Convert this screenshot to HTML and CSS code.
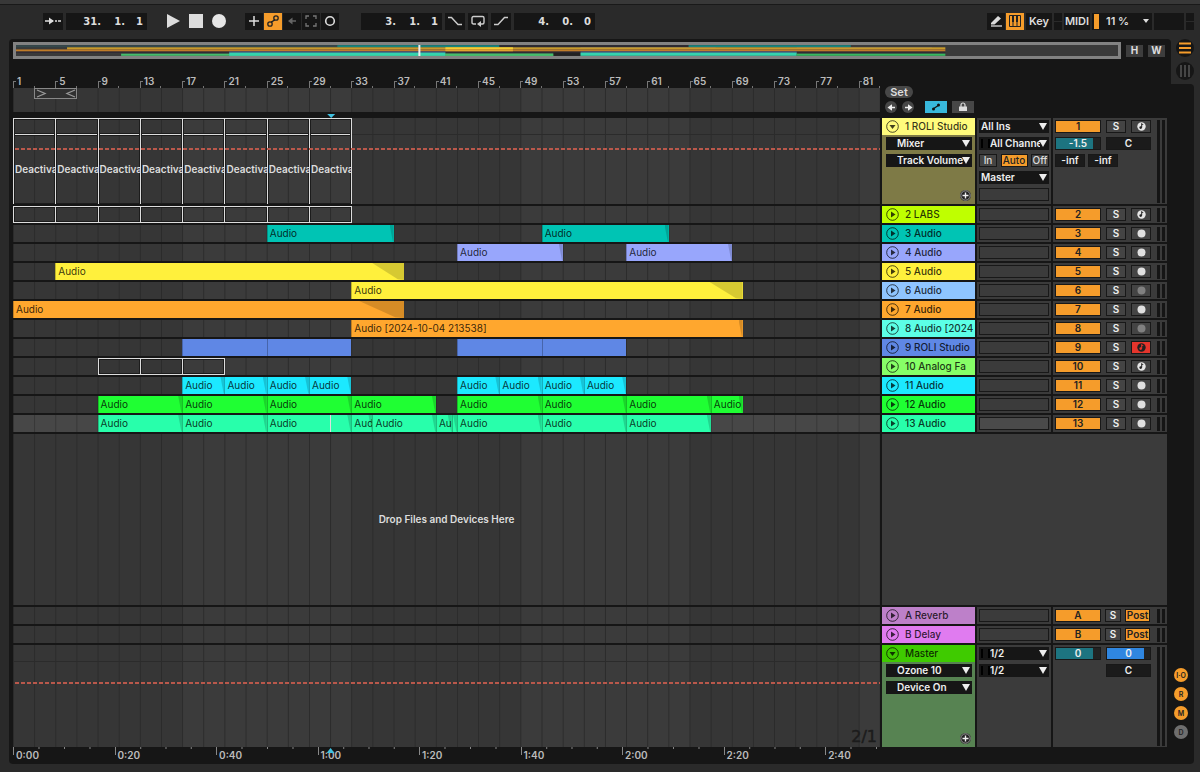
FILE: index.html
```html
<!DOCTYPE html>
<html lang="en">
<head>
    <meta charset="utf-8">
    <title>Arrangement View</title>
    <link rel="stylesheet" href="styles.css">
</head>
<body>

<header class="toolbar">
    <div class="group">
        <button class="tool follow" aria-label="Follow"><svg width="16" height="10" viewBox="0 0 16 10"><path d="M0 5h8M10 5h2M13 5h3" stroke="#ddd" stroke-width="1.5"/><path d="M4 1.5L9 5l-5 3.500z" fill="#ddd"/></svg></button>
        <div class="position">
            <input aria-label="Bar" value="31."><input aria-label="Beat" value="1."><input aria-label="Sixteenth" value="1">
        </div>
    </div>
    <div class="group transport">
        <button aria-label="Play"><svg width="14" height="16" viewBox="0 0 14 16"><path d="M1 1l13 7-13 7z" fill="#ddd"/></svg></button>
        <button aria-label="Stop"><svg width="14" height="16" viewBox="0 0 14 16"><path d="M0 1h14v14H0z" fill="#ddd"/></svg></button>
        <button aria-label="Record"><svg width="14" height="16" viewBox="0 0 14 16"><circle cx="7" cy="8" r="7" fill="#e6e6e6"/></svg></button>
    </div>
    <div class="group tight">
        <button class="tool" aria-label="Overdub"><svg width="12" height="12" viewBox="0 0 12 12"><path d="M6 1v10M1 6h10" stroke="#ddd" stroke-width="1.5"/></svg></button>
        <button class="tool on" aria-label="Automation arm"><svg width="14" height="14" viewBox="0 0 14 14" fill="none" stroke="#222" stroke-width="1.300"><circle cx="4" cy="10" r="2.200"/><circle cx="10" cy="4" r="2.200"/><path d="M5 8c2 0 2-2 4-2"/></svg></button>
        <button class="tool" aria-label="Re-enable automation"><svg width="10" height="10" viewBox="0 0 10 10"><path d="M9 5H3" stroke="#666" stroke-width="1.500"/><path d="M5.500 1.500L1 5l4.500 3.500z" fill="#666"/></svg></button>
        <button class="tool" aria-label="Capture"><svg width="12" height="12" viewBox="0 0 12 12" fill="none" stroke="#777" stroke-width="1.300"><path d="M1 4V1h3M8 1h3v3M11 8v3H8M4 11H1V8"/></svg></button>
        <button class="tool" aria-label="Session record"><svg width="12" height="12" viewBox="0 0 12 12"><circle cx="6" cy="6" r="4.300" fill="none" stroke="#ddd" stroke-width="1.600"/></svg></button>
    </div>
    <div class="group loop">
        <div class="position">
            <input aria-label="Loop bar" value="3."><input aria-label="Loop beat" value="1."><input aria-label="Loop sixteenth" value="1">
        </div>
        <button class="tool wide" aria-label="Punch in"><svg width="14" height="10" viewBox="0 0 14 10"><path d="M0 1.500h3.500L10 8.500h4" fill="none" stroke="#ccc" stroke-width="1.400"/></svg></button>
        <button class="tool wide" aria-label="Loop"><svg width="14" height="12" viewBox="0 0 14 12"><path d="M5 9H2.500Q1 9 1 7.500V3Q1 1.500 2.500 1.500h9Q13 1.500 13 3v4.500Q13 9 11.500 9H9" fill="none" stroke="#ccc" stroke-width="1.400"/><path d="M10 6v6L6 9z" fill="#ccc"/></svg></button>
        <button class="tool wide" aria-label="Punch out"><svg width="14" height="10" viewBox="0 0 14 10"><path d="M0 8.500h4L10.500 1.500H14" fill="none" stroke="#ccc" stroke-width="1.400"/></svg></button>
        <div class="position">
            <input aria-label="Length bars" value="4."><input aria-label="Length beats" value="0."><input aria-label="Length sixteenths" value="0">
        </div>
    </div>
    <div class="group right">
        <div class="group tight">
            <button class="tool" aria-label="Draw mode"><svg width="13" height="12" viewBox="0 0 13 12"><path d="M1 8l7-7 3 2.500L4.500 9.500H1z" fill="#ddd"/><path d="M1 11h11" stroke="#ddd" stroke-width="1.300"/></svg></button>
            <button class="tool on" aria-label="Computer keyboard"><svg width="12" height="12" viewBox="0 0 12 12"><path d="M.500.500h11v11H.500zM4 6v5.500M8 6v5.500" fill="none" stroke="#222"/><path d="M3 1h2v6H3zM7 1h2v6H7z" fill="#222"/></svg></button>
        </div>
        <button class="tool label">Key</button>
        <span class="led"></span>
        <button class="tool label">MIDI</button>
        <button class="tool cpu"><i></i><span>11 %</span><svg width="6" height="4" viewBox="0 0 6 4"><path d="M0 0h6L3 4z" fill="#ddd"/></svg></button>
        <span class="meter-box"></span>
        <span class="led"></span>
    </div>
</header>

<main class="workspace">
    <section class="panel">
        <div class="overview-row">
            <div class="overview">
                <svg viewBox="0 0 820 16" preserveAspectRatio="none" id="overview"></svg>
            </div>
            <button class="mini">H</button>
            <button class="mini">W</button>
        </div>

        <div class="row head">
            <div class="timeline">
                <div class="bars" id="bars"></div>
                <div class="scrub lane"><span class="brace"><svg width="100%" height="11"><path d="M3 2l8 3.500L3 9" fill="none" stroke="#999" stroke-width="1.300"/></svg><svg class="end" width="12" height="11"><path d="M10 2L2 5.500 10 9" fill="none" stroke="#999" stroke-width="1.300"/></svg></span></div>
                <div class="cue"><i></i></div>
            </div>
            <div class="locators">
                <button class="set">Set</button>
                <div class="locator-row">
                    <button class="round" aria-label="Previous locator"><svg width="11" height="11" viewBox="0 0 11 11"><path d="M9 5.500H4" stroke="#eee" stroke-width="1.500"/><path d="M6 2.300L1.500 5.500 6 8.700z" fill="#eee"/></svg></button>
                    <button class="round" aria-label="Next locator"><svg width="11" height="11" viewBox="0 0 11 11"><path d="M2 5.500h5" stroke="#eee" stroke-width="1.500"/><path d="M5 2.300l4.500 3.200L5 8.700z" fill="#eee"/></svg></button>
                    <button class="automation" aria-label="Automation mode"><svg width="10" height="8" viewBox="0 0 10 8"><path d="M2 6l6-4" stroke="#111" stroke-width="1.200"/><circle cx="2.500" cy="6" r="1.500" fill="#111"/><circle cx="7.500" cy="2" r="1.500" fill="#111"/></svg></button>
                    <button class="lock" aria-label="Lock envelopes"><svg width="10" height="10" viewBox="0 0 10 10"><path d="M1 4.500h8V9H1z" fill="#ddd"/><path d="M3 5V3a2 2 0 0 1 4 0v2" fill="none" stroke="#ddd" stroke-width="1.200"/></svg></button>
                </div>
            </div>
        </div>

        <div id="tracks"></div>

        <div class="row drop-area">
            <div class="lane"><p>Drop Files and Devices Here</p></div>
            <div class="blank"></div>
        </div>

        <div id="returns"></div>

        <div class="row foot">
            <div class="times" id="times"></div>
        </div>
    </section>

    <aside class="side">
        <div class="views">
            <button aria-label="Arrangement view"><svg width="18" height="18" viewBox="0 0 18 18"><path d="M3 4.500h12M3 9h12M3 13.500h12" stroke="#f59c2b" stroke-width="2"/></svg></button>
            <button aria-label="Session view"><svg width="18" height="18" viewBox="0 0 18 18"><path d="M5 3v12M9 3v12M13 3v12" stroke="#555" stroke-width="1.500"/></svg></button>
        </div>
        <div class="rail">
            <button>I·O</button>
            <button>R</button>
            <button>M</button>
            <button class="off">D</button>
        </div>
    </aside>
</main>

<script src="script.js"></script>
</body>
</html>
```

FILE: styles.css
```css
* {
    box-sizing: border-box;
}

body {
    margin: 0;
    min-height: 100vh;
    display: flex;
    flex-direction: column;
    background: #2a2a2a;
    border-top: 4px solid #383838;
    color: #ddd;
    font-family: Inter, "Liberation Sans", sans-serif;
    font-size: 10px;
    line-height: 13px;
}

button, input, select {
    font: inherit;
    color: inherit;
    margin: 0;
    padding: 0;
    border: 0;
    border-radius: 0;
    background: none;
}

button {
    display: flex;
    align-items: center;
    justify-content: center;
    flex: none;
}

svg {
    display: block;
}

/* Toolbar */
.toolbar {
    display: flex;
    align-items: center;
    height: 35px;
    padding: 0 6px 2px 43px;
    border-top: 1px solid #191919;
}

.group {
    display: flex;
    align-items: center;
    gap: 3px;
}

.group.tight {
    gap: 1px;
}

.transport {
    gap: 9px;
    margin: 0 19px;
}

.loop {
    margin-left: 22px;
}

.right {
    margin-left: auto;
    gap: 2px;
}

.tool {
    width: 18px;
    height: 17px;
    background: #161616;
}

.tool.wide, .tool.follow {
    width: 20px;
}

.tool.on {
    background: #f59c2b;
}

.tool.label {
    width: 26px;
    font-size: 11px;
    font-weight: 600;
}

.position {
    display: flex;
    justify-content: flex-end;
    width: 81px;
    height: 17px;
    background: #161616;
}

.position input {
    width: 24px;
    text-align: right;
    font-family: "DejaVu Sans", sans-serif;
    font-weight: bold;
}

.position input:last-child {
    padding-right: 4px;
    width: 22px;
}

.led {
    width: 8px;
    height: 17px;
    background: linear-gradient(#161616 8px, #2a2a2a 8px, #2a2a2a 9px, #161616 9px);
}

.tool.cpu {
    width: 60px;
    padding: 0 3px 0 2px;
    gap: 7px;
    font-size: 11px;
    font-weight: 600;
}

.cpu i {
    width: 5px;
    height: 15px;
    background: #f59c2b;
}

.cpu span {
    flex: 1;
    text-align: left;
    white-space: nowrap;
}

.meter-box {
    width: 30px;
    height: 17px;
    background: #161616;
}

/* Main frame */
.workspace {
    flex: 1;
    display: flex;
    margin: 0 6px 8px 9px;
}

.panel {
    flex: 1;
    min-width: 0;
    display: flex;
    flex-direction: column;
    padding: 3px 4px 0;
    background: #161616;
    border-radius: 4px 4px 0 4px;
}

.side {
    width: 23px;
    display: flex;
    flex-direction: column;
}

.views {
    height: 45px;
    display: flex;
    flex-direction: column;
    align-items: flex-end;
    gap: 5px;
}

.views button {
    background: #161616;
    border-radius: 50%;
}

.rail {
    flex: 1;
    display: flex;
    flex-direction: column;
    justify-content: flex-end;
    gap: 5px;
    padding: 0 3px 25px;
    background: #161616;
    border-radius: 0 4px 4px 0;
}

.rail button {
    width: 14px;
    height: 14px;
    border-radius: 50%;
    background: #f59c2b;
    color: #222;
    font-size: 7px;
    font-weight: 600;
}

.rail .off {
    background: #6e6e6e;
}

.overview-row {
    display: flex;
    gap: 5px;
    padding-right: 2px;
    align-items: center;
}

.overview {
    flex: 1;
    height: 17px;
    position: relative;
    background: #3a3a3a;
}

.overview svg {
    width: 100%;
    height: 17px;
}

.overview::after {
    content: "";
    position: absolute;
    inset: 0;
    border: 3px solid #828282;
}

.mini {
    width: 17px;
    height: 12px;
    background: #3d3d3d;
    font-weight: 700;
}

/* Rows share the same four columns */
.row {
    display: grid;
    grid-template-columns: minmax(0, 1fr) 93px 74px 114px;
    column-gap: 2px;
    margin-bottom: 2px;
}

.lane {
    display: grid;
    grid-template-columns: repeat(328, minmax(0, 1fr));
    grid-template-rows: 100%;
    position: relative;
    background:
        linear-gradient(to right, #2b2b2b 1px, transparent 1px) 0 0 / calc(100% / 41) 100%,
        linear-gradient(to right, #363636 50%, #3b3b3b 50%) 0 0 / calc(100% * 32 / 82) 100%;
}

/* Bar ruler */
.row.head {
    margin: 0;
    padding-top: 16px;
}

.bars {
    display: flex;
    height: 13px;
    overflow: hidden;
    color: #bbb;
    font-size: 10px;
    font-weight: 600;
}

.bars span {
    flex: 0 0 calc(100% * 4 / 82);
    padding-left: 4px;
    background:
        linear-gradient(#777, #777) 0 100% / 1px 7px no-repeat,
        linear-gradient(#777, #777) 0 6px / 3px 1px no-repeat,
        linear-gradient(#777, #777) 50% 100% / 1px 2px no-repeat;
}

.scrub {
    height: 24px;
}

.brace {
    grid-column: 9 / 25;
    display: flex;
    height: 11px;
    margin-right: -1px;
    outline: 1px solid #888;
    outline-offset: -1px;
    background: #303030;
}

.brace svg {
    min-width: 0;
}

.brace .end {
    flex: none;
}

.cue {
    display: grid;
    grid-template-columns: repeat(82, minmax(0, 1fr));
    height: 6px;
    padding-top: 2px;
}

.cue i {
    grid-column: 31;
    width: 8px;
    height: 4px;
    margin-left: -3px;
    background: #3fc0e0;
    clip-path: polygon(0 0, 100% 0, 50% 100%);
}

.locators {
    grid-column: 2 / 5;
    padding: 11px 0 0 3px;
}

.set {
    width: 28px;
    height: 12px;
    border-radius: 6px;
    background: #474747;
    font-size: 11px;
    font-weight: 600;
}

.locator-row {
    display: flex;
    align-items: center;
    margin-top: 3px;
}

.round {
    width: 12px;
    height: 12px;
    margin-right: 5px;
    border-radius: 50%;
    background: #474747;
}

.automation, .lock {
    width: 22px;
    height: 12px;
    margin-left: 6px;
    background: #38b8dc;
}

.lock {
    margin-left: 5px;
    background: #474747;
}

/* Tracks */
.track {
    height: 17px;
}

.track.open {
    height: 86px;
}

.track.master {
    height: 102px;
    margin: 0;
}

.track.open .lane {
    grid-template-rows: 17px 1fr;
}

.track.open .lane::before {
    content: "";
    position: absolute;
    inset: 16px 0 auto;
    height: 1px;
    background: #2b2b2b;
}

.track.selected .lane {
    background:
        linear-gradient(to right, #363636 1px, transparent 1px) 0 0 / calc(100% / 41) 100%,
        #474747;
}

.envelope {
    position: absolute;
    inset: 30px 0 auto 2px;
    height: 2px;
    background: repeating-linear-gradient(to right, #b9584b 0, #b9584b 4px, transparent 4px, transparent 6px);
}

.master .envelope {
    inset: 37px 0 auto 2px;
}

.zoom-label {
    position: absolute;
    right: 3px;
    bottom: 0;
    color: #1c1c1c;
    font-family: "DejaVu Sans", sans-serif;
    font-size: 16px;
    line-height: 20px;
    -webkit-text-stroke: 0.5px #1c1c1c;
}

.clip {
    grid-row: 1;
    position: relative;
    overflow: hidden;
    padding-left: 2px;
    border-left: 1px solid rgba(0, 0, 0, 0.25);
    color: rgba(0, 0, 0, 0.8);
    line-height: 16px;
    white-space: nowrap;
    background: var(--color);
}

.clip.audio::after {
    content: "";
    position: absolute;
    inset: 0 0 0 auto;
    width: var(--fade, 4px);
    background: rgba(0, 0, 0, 0.16);
    clip-path: polygon(0 0, 100% 0, 100% 100%, 80% 95%);
}

.clip.empty {
    margin-right: -1px;
    padding: 0;
    border: 1px solid #ddd;
    background: none;
    box-shadow: inset 0 0 0 1px #1c1c1c;
}

.track.open .clip.empty {
    grid-row: 1 / 3;
    border-bottom: 0;
    background:
        linear-gradient(#1c1c1c, #1c1c1c) 0 14px / 100% 1px no-repeat,
        linear-gradient(#ddd, #ddd) 0 15px / 100% 1px no-repeat,
        linear-gradient(#1c1c1c, #1c1c1c) 0 16px / 100% 1px no-repeat;
    color: #ddd;
    font-weight: 600;
    padding: 42px 0 0 1px;
}

.playhead {
    grid-row: 1;
    width: 1px;
    background: #ddd;
    z-index: 1;
}

.title {
    position: relative;
    background: var(--body);
}

.title h2 {
    display: flex;
    align-items: center;
    gap: 6px;
    height: 17px;
    margin: 0;
    padding-left: 4px;
    overflow: hidden;
    background: var(--color);
    color: rgba(0, 0, 0, 0.8);
    font-size: 10px;
    font-weight: 500;
    white-space: nowrap;
}

.title .drop {
    margin: 2px 3px 4px 4px;
}

.title .drop select {
    padding-left: 11px;
}

.add {
    position: absolute;
    right: 4px;
    bottom: 3px;
    width: 11px;
    height: 11px;
    border-radius: 50%;
    background: #222;
}

.io, .mixer, .blank {
    background: #3b3b3b;
}

.io {
    display: flex;
    flex-direction: column;
    gap: 4px;
    padding: 2px;
}

.slot {
    height: 13px;
    border: 1px solid #181818;
}

.selected .slot {
    background: #4a4a4a;
}

.drop {
    position: relative;
    display: block;
    height: 13px;
    background: #161616;
}

.drop select {
    display: block;
    width: 100%;
    height: 13px;
    padding: 0 9px 0 2px;
    appearance: none;
    font-weight: 600;
    color: #eee;
    overflow: hidden;
}

.drop::after {
    content: "";
    position: absolute;
    top: 3px;
    right: 2px;
    width: 8px;
    height: 7px;
    background: #eee;
    clip-path: polygon(0 0, 100% 0, 50% 100%);
    pointer-events: none;
}

.drop.signal select {
    padding-left: 11px;
}

.drop.signal::before {
    content: "";
    position: absolute;
    inset: 2px auto 2px 2px;
    width: 5px;
    border: 2px solid #000;
    border-width: 0 2px;
}

.monitor {
    display: flex;
    justify-content: space-between;
}

.monitor button {
    width: 18px;
    height: 13px;
    border: 1px solid #181818;
    background: #444;
    font-weight: 500;
}

.monitor .on {
    width: 27px;
    background: #f59c2b;
    color: #222;
}

.mixer {
    display: flex;
    justify-content: space-between;
    padding: 0 2px;
}

.controls {
    display: grid;
    grid-template-columns: 46px 20px 20px;
    grid-auto-rows: 13px;
    gap: 4px 5px;
    padding-top: 2px;
}

.controls.return {
    grid-template-columns: 46px 16px 25px;
    column-gap: 4px;
}

.controls button, .controls input {
    width: 100%;
    height: 13px;
    border: 1px solid #181818;
    background: #444;
    color: #eee;
    font-weight: 600;
    text-align: center;
}

.controls .on {
    background: #f59c2b;
    color: #222;
}

.controls .armed {
    background: #e5352c;
}

.controls input {
    background: #1b1b1b;
}

.controls .volume {
    background: linear-gradient(to right, #1d7480 85%, #222 85%);
}

.controls .cue-volume {
    background: linear-gradient(to right, #2f86e0 85%, #222 85%);
}

.controls .span {
    grid-column: 2 / 4;
}

.peaks {
    grid-column: 1 / 4;
    display: flex;
    gap: 3px;
}

.controls .peaks input {
    width: 30px;
}

.meters {
    width: 8px;
    margin: 2px 0 1px;
    border: 3px solid #151515;
    border-width: 0 3px;
}

.drop-area {
    flex: 1;
}

.drop-area .lane {
    display: flex;
    align-items: center;
    justify-content: center;
    font-weight: 600;
}

.drop-area .blank {
    grid-column: 2 / 5;
}

/* Time ruler */
.row.foot {
    margin: 0;
}

.times {
    display: flex;
    height: 17px;
    overflow: hidden;
    color: #bbb;
    font-size: 10px;
    font-weight: 600;
}

.times span {
    flex: 0 0 calc(100% / 8.54);
    position: relative;
    padding: 2px 0 0 3px;
    background:
        linear-gradient(#888, #888) 0 0 / 1px 8px no-repeat,
        linear-gradient(to right, #888 1px, transparent 1px) 0 0 / 25% 2px repeat-x;
}

.times .now::after {
    content: "";
    position: absolute;
    top: 1px;
    left: 9px;
    width: 8px;
    height: 5px;
    background: #3fc0e0;
    clip-path: polygon(50% 0, 100% 100%, 0 100%);
}
```

FILE: script.js
```javascript
const yellow = "#fff03c", orange = "#ffa72e";

// clips are [start bar, end bar, name, fade width]
const tracks = [
    { name: "1 ROLI Studio", color: "#fffb7c", body: "#7e7a46", open: true, midi: true, empty: true,
      clips: [1, 5, 9, 13, 17, 21, 25, 29].map(b => [b, b + 4, "Deactivated"]) },
    { name: "2 LABS", color: "#bfff00", midi: true, empty: true,
      clips: [1, 5, 9, 13, 17, 21, 25, 29].map(b => [b, b + 4, ""]) },
    { name: "3 Audio", color: "#00c4b4", clips: [[25, 37, "Audio"], [51, 63, "Audio"]] },
    { name: "4 Audio", color: "#98a6fc", clips: [[43, 53, "Audio"], [59, 69, "Audio"]] },
    { name: "5 Audio", color: yellow, clips: [[5, 38, "Audio", 32]] },
    { name: "6 Audio", color: "#8fc5ff", clipColor: yellow, dim: true, clips: [[33, 70, "Audio", 33]] },
    { name: "7 Audio", color: orange, clips: [[1, 38, "Audio", 45]] },
    { name: "8 Audio [2024", color: "#5cffe6", clipColor: orange, dim: true, clips: [[33, 70, "Audio [2024-10-04 213538]"]] },
    { name: "9 ROLI Studio", color: "#5f87e5", midi: true, armed: true,
      clips: [[17, 25, ""], [25, 33, ""], [43, 51, ""], [51, 59, ""]] },
    { name: "10 Analog Fa", color: "#87ff67", midi: true, empty: true, clips: [[9, 13, ""], [13, 17, ""], [17, 21, ""]] },
    { name: "11 Audio", color: "#1ce9ff", clips: [17, 21, 25, 29, 43, 47, 51, 55].map(b => [b, b + 4, "Audio"]) },
    { name: "12 Audio", color: "#1fff33",
      clips: [[9, 17], [17, 25], [25, 33], [33, 41], [43, 51], [51, 59], [59, 67], [67, 70]].map(c => [...c, "Audio"]) },
    { name: "13 Audio", color: "#28ffab", selected: true, playhead: 31,
      clips: [[9, 17], [17, 25], [25, 33], [33, 35], [35, 41], [41, 42.5], [43, 51], [51, 59], [59, 67]].map(c => [...c, "Audio"]).concat([[42.5, 43, ""]]) }
];

const returns = [
    { name: "A Reverb", color: "#bd80c9", key: "A" },
    { name: "B Delay", color: "#e07bf0", key: "B" }
];

const column = bar => Math.round((bar - 1) * 4) + 1;

function drop(value, cls, label) {
    return `<label class="drop ${cls || ""}"><select aria-label="${label}"><option>${value}</option></select></label>`;
}

function fold(open) {
    const d = open ? "M3.500 5h6L6.500 9z" : "M5 3.500v6l4.500-3z";
    return `<button aria-label="Fold"><svg width="13" height="13" viewBox="0 0 13 13"><circle cx="6.500" cy="6.500" r="5.800" fill="none" stroke="#000" stroke-opacity=".7"/><path d="${d}" fill="#000" fill-opacity=".75"/></svg></button>`;
}

function recordIcon(t) {
    if (t.midi) {
        const a = t.armed ? "#222" : "#e6e6e6", b = t.armed ? "#e5352c" : "#222";
        return `<svg width="9" height="9" viewBox="0 0 9 9"><circle cx="4.500" cy="4.500" r="4.200" fill="${a}"/><circle cx="3.700" cy="5.600" r="1.300" fill="${b}"/><path d="M4.700 5.500V1.500l1.500 1.500" stroke="${b}" fill="none"/></svg>`;
    }
    return `<svg width="9" height="9" viewBox="0 0 9 9"><circle cx="4.500" cy="4.500" r="4" fill="${t.dim ? "#808080" : "#e0e0e0"}"/></svg>`;
}

const plus = `<button class="add" aria-label="Add lane"><svg width="11" height="11" viewBox="0 0 11 11"><circle cx="5.500" cy="5.500" r="4.700" fill="none" stroke="#999"/><path d="M5.500 2.500v6M2.500 5.500h6" stroke="#eee" stroke-width="1.400"/></svg></button>`;

function clipHtml(t, [start, end, name, fade]) {
    const kind = t.empty ? "empty" : t.midi ? "" : "audio";
    const fadeStyle = fade ? `;--fade:${fade}px` : "";
    return `<div class="clip ${kind}" style="grid-column:${column(start)}/${column(end)};--color:${t.clipColor || t.color}${fadeStyle}">${name}</div>`;
}

function trackHtml(t, i) {
    const playhead = t.playhead ? `<i class="playhead" style="grid-column:${column(t.playhead)}"></i>` : "";
    const io = t.open
        ? drop("All Ins", "", "Input") + drop("All Channels", "signal", "Channel") +
          `<div class="monitor"><button>In</button><button class="on">Auto</button><button>Off</button></div>` +
          drop("Master", "", "Output") + `<div class="slot"></div>`
        : `<div class="slot"></div>`;
    const extra = t.open
        ? `<input class="volume" aria-label="Volume" value="-1.5"><input class="span" aria-label="Pan" value="C">
           <div class="peaks"><input aria-label="Peak" value="-inf"><input aria-label="Send" value="-inf"></div>`
        : "";
    return `<div class="row track ${t.open ? "open" : ""} ${t.selected ? "selected" : ""}">
        <div class="lane">${t.clips.map(c => clipHtml(t, c)).join("")}${playhead}${t.open ? '<i class="envelope"></i>' : ""}</div>
        <div class="title" style="--color:${t.color};--body:${t.body || t.color}">
            <h2>${fold(t.open)}<span>${t.name}</span></h2>
            ${t.open ? drop("Mixer", "", "Device") + drop("Track Volume", "", "Parameter") + plus : ""}
        </div>
        <div class="io">${io}</div>
        <div class="mixer">
            <div class="controls">
                <button class="on">${i + 1}</button><button>S</button>
                <button class="${t.armed ? "armed" : ""}" aria-label="Arm">${recordIcon(t)}</button>${extra}
            </div>
            <div class="meters"></div>
        </div>
    </div>`;
}

function returnHtml(r) {
    return `<div class="row track">
        <div class="lane"></div>
        <div class="title" style="--color:${r.color}"><h2>${fold(false)}<span>${r.name}</span></h2></div>
        <div class="io"><div class="slot"></div></div>
        <div class="mixer">
            <div class="controls return"><button class="on">${r.key}</button><button>S</button><button class="on">Post</button></div>
            <div class="meters"></div>
        </div>
    </div>`;
}

const master = `<div class="row track open master">
    <div class="lane"><i class="envelope"></i><span class="zoom-label">2/1</span></div>
    <div class="title" style="--color:#3fcb00;--body:#578352">
        <h2>${fold(true)}<span>Master</span></h2>
        ${drop("Ozone 10", "", "Device")}${drop("Device On", "", "Parameter")}${plus}
    </div>
    <div class="io">${drop("1/2", "signal", "Cue out")}${drop("1/2", "signal", "Master out")}</div>
    <div class="mixer">
        <div class="controls">
            <input class="volume" aria-label="Master volume" value="0"><input class="span cue-volume" aria-label="Cue volume" value="0">
            <input class="span" aria-label="Master pan" value="C">
        </div>
        <div class="meters"></div>
    </div>
</div>`;

document.getElementById("tracks").innerHTML = tracks.map(trackHtml).join("");
document.getElementById("returns").innerHTML = returns.map(returnHtml).join("") + master;

// Rulers
let bars = "";
for (let b = 1; b <= 81; b += 4) bars += `<span>${b}</span>`;
document.getElementById("bars").innerHTML = bars;

let times = "";
for (let s = 0; s <= 160; s += 20) {
    times += `<span class="${s === 60 ? "now" : ""}">${Math.floor(s / 60)}:${String(s % 60).padStart(2, "0")}</span>`;
}
document.getElementById("times").innerHTML = times;

// Overview strips: [start bar, end bar, y, height, color]
const strips = [
    [1, 25, 3, 2, "#34484b"], [25, 37, 3, 2, "#17857e"], [37, 51, 3, 2, "#2b2930"], [51, 63, 3, 2, "#17857e"],
    [43, 53, 5, 1, "#565a80"], [59, 69, 5, 1, "#565a80"],
    [5, 70, 5, 2, "#c79b2c"], [33, 38, 5, 2, "#f3cf35"],
    [1, 70, 7, 2, "#c07c28"], [33, 38, 7, 2, "#e2a52d"],
    [1, 70, 9, 1, "#2b2433"], [17, 33, 9, 1, "#4d66a8"], [43, 59, 9, 1, "#4d66a8"],
    [9, 41, 11, 2, "#46bd6c"], [17, 33, 10, 3, "#35d3ad"], [33, 41, 11, 2, "#46bd6c"],
    [41, 43, 10, 3, "#222"], [43, 59, 10, 3, "#35d3ad"], [59, 70, 11, 2, "#38b860"]
];
document.getElementById("overview").innerHTML = strips.map(([a, b, y, h, c]) =>
    `<rect x="${(a - 1) * 10}" y="${y}" width="${(b - a) * 10}" height="${h}" fill="${c}"/>`
).join("") + '<rect x="300" y="2" width="1.500" height="12" fill="#eee"/>';
```
